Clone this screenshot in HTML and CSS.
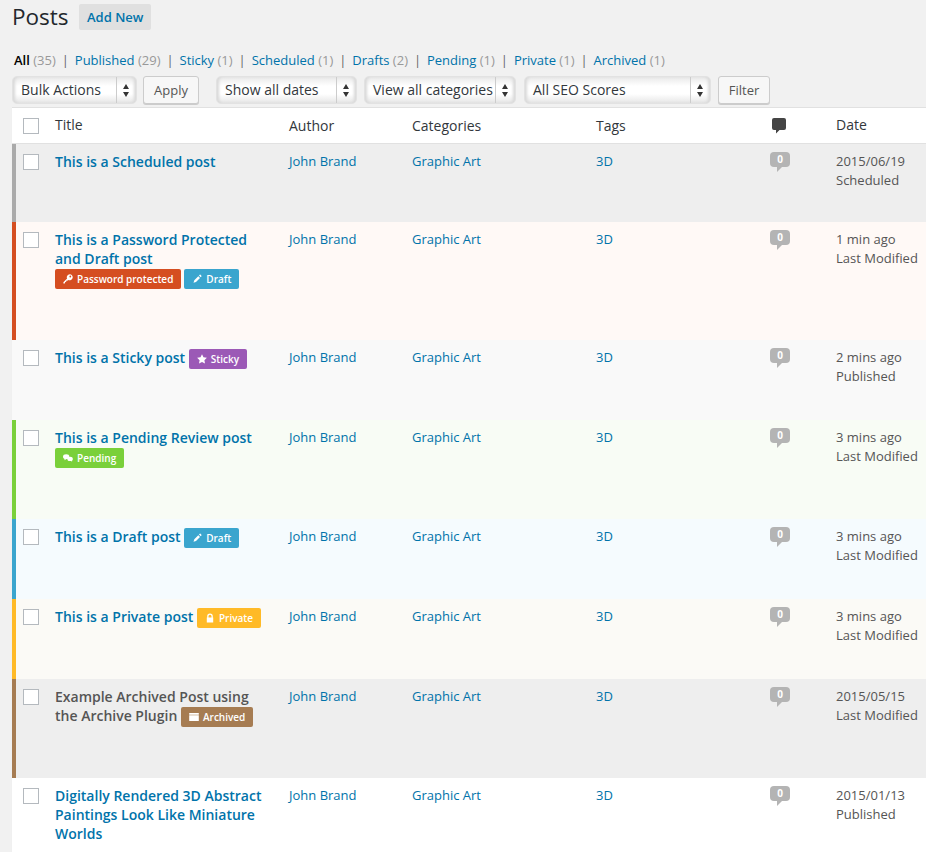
FILE: index.html
```html
<html><head>
    <meta charset="UTF-8">
    <title>Posts</title>
    <link rel="stylesheet" href="styles.css">
</head>

<body>
    <div class="wrap">
        <div class="page-head">
            <h1>Posts</h1>
            <a class="add-new">Add New</a>
        </div>
        <ul class="subsubsub">
            <li><a class="current">All</a> <span class="count">(35)</span><span class="sep">|</span></li>
            <li><a>Published</a> <span class="count">(29)</span><span class="sep">|</span></li>
            <li><a>Sticky</a> <span class="count">(1)</span><span class="sep">|</span></li>
            <li><a>Scheduled</a> <span class="count">(1)</span><span class="sep">|</span></li>
            <li><a>Drafts</a> <span class="count">(2)</span><span class="sep">|</span></li>
            <li><a>Pending</a> <span class="count">(1)</span><span class="sep">|</span></li>
            <li><a>Private</a> <span class="count">(1)</span><span class="sep">|</span></li>
            <li><a>Archived</a> <span class="count">(1)</span></li>
        </ul>
        <div class="tablenav">
            <div class="select sel-bulk"><span>Bulk Actions</span><i class="arrows"></i></div>
            <div class="button btn-apply">Apply</div>
            <div class="select sel-dates"><span>Show all dates</span><i class="arrows"></i></div>
            <div class="select sel-cats"><span>View all categories</span><i class="arrows"></i></div>
            <div class="select sel-seo"><span>All SEO Scores</span><i class="arrows"></i></div>
            <div class="button btn-filter">Filter</div>
        </div>
        <table class="posts">
            <colgroup>
                <col class="c-check"><col class="c-title"><col class="c-author"><col class="c-cats"><col class="c-tags"><col class="c-comments"><col class="c-date">
            </colgroup>
            <thead>
                <tr>
                    <th class="check"><span class="cb"></span></th>
                    <th class="th-title">Title</th>
                    <th>Author</th>
                    <th>Categories</th>
                    <th>Tags</th>
                    <th class="th-comments"><svg width="14" height="16" viewBox="0 0 14 16"><path d="M2 0h10a2 2 0 0 1 2 2v8a2 2 0 0 1-2 2H7.500L4 15.500V12H2a2 2 0 0 1-2-2V2a2 2 0 0 1 2-2z" fill="#444"/></svg></th>
                    <th class="th-date">Date</th>
                </tr>
            </thead>
            <tbody>
                <tr class="row scheduled">
                    <td class="check"><span class="cb"></span></td>
                    <td class="title"><a>This is a Scheduled post</a></td>
                    <td><a>John Brand</a></td><td><a>Graphic Art</a></td><td><a>3D</a></td>
                    <td class="comments"><span class="bubble">0</span></td>
                    <td class="date">2015/06/19<br>Scheduled</td>
                </tr>
                <tr class="row protected">
                    <td class="check"><span class="cb"></span></td>
                    <td class="title"><a>This is a Password Protected and Draft post</a>
                        <div class="states">
                            <span class="state st-protected"><svg width="10" height="10" viewBox="0 0 10 10"><path d="M6.700.3a3 3 0 1 1-1.500 5.600L4.300 6.800H3.200v1.100H2.100V9L1.600 9.600H.4V8.300l3.700-3.700A3 3 0 0 1 6.700.3zm.6 1.300a.9.9 0 1 0 0 1.800.9.9 0 0 0 0-1.800z" fill="#fff" fill-rule="evenodd"/></svg>Password protected</span>
                            <span class="state st-draft"><svg width="10" height="10" viewBox="0 0 10 10"><path d="M6.300 2.200l1.700 1.700-4 4-2.500.8.800-2.500zM7 1.500l.7-.7a.6.600 0 0 1 .8 0l.9.900a.6.600 0 0 1 0 .8l-.7.700z" fill="#fff"/></svg>Draft</span>
                        </div>
                    </td>
                    <td><a>John Brand</a></td><td><a>Graphic Art</a></td><td><a>3D</a></td>
                    <td class="comments"><span class="bubble">0</span></td>
                    <td class="date">1 min ago<br>Last Modified</td>
                </tr>
                <tr class="row sticky">
                    <td class="check"><span class="cb"></span></td>
                    <td class="title"><a>This is a Sticky post</a>
                        <span class="state st-sticky"><svg width="10" height="10" viewBox="0 0 10 10"><path d="M5 .2l1.500 3.100 3.400.5-2.500 2.400.6 3.400L5 8l-3 1.600.6-3.400L.1 3.800l3.400-.5z" fill="#fff"/></svg>Sticky</span>
                    </td>
                    <td><a>John Brand</a></td><td><a>Graphic Art</a></td><td><a>3D</a></td>
                    <td class="comments"><span class="bubble">0</span></td>
                    <td class="date">2 mins ago<br>Published</td>
                </tr>
                <tr class="row pending">
                    <td class="check"><span class="cb"></span></td>
                    <td class="title"><a>This is a Pending Review post</a>
                        <div class="states">
                            <span class="state st-pending"><svg width="10" height="10" viewBox="0 0 11 10"><ellipse cx="3.500" cy="3.500" rx="3.500" ry="2.700" fill="#fff"/><path d="M2 5l-.5 2.500L4 6z" fill="#fff"/><ellipse cx="7.800" cy="6" rx="3" ry="2.400" fill="#fff"/><path d="M8.500 7.500l1.500 2-.2-2.500z" fill="#fff"/></svg>Pending</span>
                        </div>
                    </td>
                    <td><a>John Brand</a></td><td><a>Graphic Art</a></td><td><a>3D</a></td>
                    <td class="comments"><span class="bubble">0</span></td>
                    <td class="date">3 mins ago<br>Last Modified</td>
                </tr>
                <tr class="row draft">
                    <td class="check"><span class="cb"></span></td>
                    <td class="title"><a>This is a Draft post</a>
                        <span class="state st-draft"><svg width="10" height="10" viewBox="0 0 10 10"><path d="M6.300 2.200l1.700 1.700-4 4-2.500.8.800-2.500zM7 1.500l.7-.7a.6.600 0 0 1 .8 0l.9.900a.6.600 0 0 1 0 .8l-.7.700z" fill="#fff"/></svg>Draft</span>
                    </td>
                    <td><a>John Brand</a></td><td><a>Graphic Art</a></td><td><a>3D</a></td>
                    <td class="comments"><span class="bubble">0</span></td>
                    <td class="date">3 mins ago<br>Last Modified</td>
                </tr>
                <tr class="row private">
                    <td class="check"><span class="cb"></span></td>
                    <td class="title"><a>This is a Private post</a>
                        <span class="state st-private"><svg width="10" height="10" viewBox="0 0 10 10"><path d="M2.200 4.500V3.200a2.800 2.800 0 0 1 5.600 0v1.300h.4V9.500H1.800v-5zm1.300 0h3V3.200a1.500 1.500 0 0 0-3 0z" fill="#fff" fill-rule="evenodd"/></svg>Private</span>
                    </td>
                    <td><a>John Brand</a></td><td><a>Graphic Art</a></td><td><a>3D</a></td>
                    <td class="comments"><span class="bubble">0</span></td>
                    <td class="date">3 mins ago<br>Last Modified</td>
                </tr>
                <tr class="row archived">
                    <td class="check"><span class="cb"></span></td>
                    <td class="title"><a>Example Archived Post using the Archive Plugin</a>
                        <span class="state st-archived"><svg width="10" height="10" viewBox="0 0 10 10"><path d="M.2 1h9.600v1.700H.2zM.2 3.300h9.600V9H.2z" fill="#fff"/></svg>Archived</span>
                    </td>
                    <td><a>John Brand</a></td><td><a>Graphic Art</a></td><td><a>3D</a></td>
                    <td class="comments"><span class="bubble">0</span></td>
                    <td class="date">2015/05/15<br>Last Modified</td>
                </tr>
                <tr class="row published">
                    <td class="check"><span class="cb"></span></td>
                    <td class="title"><a>Digitally Rendered 3D Abstract Paintings Look Like Miniature Worlds</a></td>
                    <td><a>John Brand</a></td><td><a>Graphic Art</a></td><td><a>3D</a></td>
                    <td class="comments"><span class="bubble">0</span></td>
                    <td class="date">2015/01/13<br>Published</td>
                </tr>
            </tbody>
        </table>
    </div>
</body></html>
```

FILE: styles.css
```css
html, body {
    margin: 0;
    padding: 0;
    height: 852px;
    overflow: hidden;
}

body {
    background-color: #f1f1f1;
    font-family: "Open Sans", sans-serif;
    font-size: 13px;
    color: #444;
}

a {
    color: #0073aa;
}

.wrap {
    padding: 0 0 0 12px;
}

.page-head {
    display: flex;
    align-items: flex-start;
    height: 44px;
    padding-top: 4px;
}

h1 {
    margin: 0;
    width: 56px;
    font-size: 22.5px;
    font-weight: 400;
    line-height: 26px;
    color: #23282d;
}

.add-new {
    margin-left: 11px;
    background-color: #e0e0e0;
    border-radius: 2px;
    padding: 0 8px;
    line-height: 26px;
    font-size: 13px;
    font-weight: 600;
    color: #0073aa;
}

.subsubsub {
    list-style: none;
    display: flex;
    margin: 0;
    padding: 0 0 0 2px;
    height: 28px;
    line-height: 24px;
    font-size: 13px;
}

.subsubsub .current {
    color: #000;
    font-weight: 600;
}

.count {
    color: #999;
}

.sep {
    color: #666;
    margin: 0 5.95px;
}

.tablenav {
    display: flex;
    height: 31px;
    align-items: flex-start;
}

.select {
    box-sizing: border-box;
    display: flex;
    justify-content: space-between;
    height: 28px;
    line-height: 26px;
    border: 1px solid #e2e2e2;
    border-radius: 5px;
    background: linear-gradient(#e9e9e9, #fff 35%, #fff 65%, #e6e6e6);
    box-shadow: inset 3px 0 3px -1px #d8d8d8, inset -3px 0 3px -1px #d8d8d8;
    font-size: 14px;
    color: #32373c;
    padding-left: 8px;
}

.arrows {
    position: relative;
    display: block;
    width: 15px;
    border-left: 1px solid #ccc;
    margin-right: 4px;
}

.arrows::before, .arrows::after {
    content: "";
    position: absolute;
    left: 6px;
    border-left: 3px solid transparent;
    border-right: 3px solid transparent;
}

.arrows::before {
    top: 7px;
    border-bottom: 5px solid #333;
}

.arrows::after {
    top: 15px;
    border-top: 5px solid #333;
}

.sel-bulk { width: 125px; }
.sel-dates { width: 141px; margin-left: 17px; }
.sel-cats { width: 152px; margin-left: 7px; }
.sel-seo { width: 187px; margin-left: 8px; }

.button {
    box-sizing: border-box;
    height: 28px;
    line-height: 27px;
    padding: 0 10px;
    border: 1px solid #ccc;
    border-radius: 3px;
    background-color: #f7f7f7;
    box-shadow: 0 1px 0 #ccc;
    font-size: 13px;
    color: #555;
}

.btn-apply { margin-left: 6px; width: 56px; padding: 0; text-align: center; }
.btn-filter { margin-left: 7px; width: 52px; padding: 0; text-align: center; }

.posts {
    width: 914px;
    table-layout: fixed;
    border-collapse: separate;
    border-spacing: 0;
    background-color: #fff;
    box-shadow: 0 1px 1px rgba(0, 0, 0, 0.04);
}

.c-check { width: 43px; }
.c-title { width: 234px; }
.c-author { width: 123px; }
.c-cats { width: 184px; }
.c-tags { width: 174px; }
.c-comments { width: 66px; }
.c-date { width: 90px; }

th {
    height: 37px;
    padding: 0;
    text-align: left;
    font-size: 14px;
    font-weight: 400;
    color: #32373c;
    background-color: #fff;
    border-top: 1px solid #e1e1e1;
    border-bottom: 1px solid #e1e1e1;
}

.th-title, .th-date {
    padding-bottom: 2px;
}

.th-comments svg {
    display: block;
    margin-left: 2px;
}

td {
    padding: 8px 0 0;
    vertical-align: top;
    line-height: 19px;
    font-size: 13px;
}

.cb {
    display: block;
    box-sizing: border-box;
    width: 16px;
    height: 16px;
    border: 1px solid #b4b9be;
    background-color: #fff;
    margin-left: 11px;
}

td .cb {
    margin-top: 2px;
}

.title {
    padding-right: 20px;
    font-size: 14px;
    font-weight: 600;
}

.states {
    display: flex;
    gap: 3px;
    margin-top: 1px;
}

.state {
    display: inline-flex;
    align-items: center;
    gap: 4px;
    height: 20px;
    padding: 0 8px;
    border-radius: 2px;
    font-size: 10px;
    line-height: 20px;
    font-weight: 600;
    color: #fff;
    vertical-align: top;
}

td > .state {
    margin-top: 1px;
}

.st-protected { background-color: #d54e21; }
.st-draft { background-color: #3aa5ce; }
.st-sticky { background-color: #9b59b6; }
.st-pending { background-color: #7ad03a; }
.st-private { background-color: #ffba27; }
.st-archived { background-color: #a67c52; }

.comments {
    padding-top: 8px;
}

.bubble {
    position: relative;
    display: block;
    width: 20px;
    height: 15px;
    background-color: #b4b4b4;
    border-radius: 4px;
    color: #fff;
    font-size: 10px;
    font-weight: 700;
    line-height: 14px;
    text-align: center;
}

.bubble::after {
    content: "";
    position: absolute;
    left: 7px;
    top: 15px;
    border-top: 5px solid #b4b4b4;
    border-right: 5px solid transparent;
}

.date {
    color: #555;
}

.scheduled { height: 78px; background-color: #eee; }
.scheduled .check { box-shadow: inset 4px 0 0 #aaa; }
.protected { height: 118px; background-color: #fff9f6; }
.protected .check { box-shadow: inset 4px 0 0 #d54e21; }
.sticky { height: 80px; background-color: #f9f9f9; }
.pending { height: 99px; background-color: #f8fcf5; }
.pending .check { box-shadow: inset 4px 0 0 #7ad03a; }
.draft { height: 80px; background-color: #f5fbfe; }
.draft .check { box-shadow: inset 4px 0 0 #3aa5ce; }
.private { height: 80px; background-color: #fbfaf6; }
.private .check { box-shadow: inset 4px 0 0 #ffba27; }
.archived { height: 99px; background-color: #eee; }
.archived .check { box-shadow: inset 4px 0 0 #a67c52; }
.published { height: 80px; background-color: #fff; }
.archived .title a { color: #555; }
```
